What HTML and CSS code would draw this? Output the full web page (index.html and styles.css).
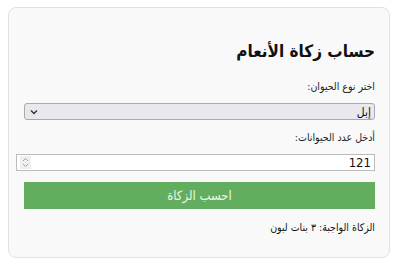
FILE: index.html
```html
<!DOCTYPE html>
<html lang="ar" dir="rtl">
<head>
<meta charset="utf-8">
<link rel="stylesheet" href="styles.css">
</head>
<body>
<div class="card">
  <h2 class="title">حساب زكاة الأنعام</h2>
  <label class="label" for="animal">اختر نوع الحيوان:</label>
  <div class="select-wrap">
    <select id="animal" class="select">
      <option>إبل</option>
    </select>
    <svg class="chev" width="8" height="6" viewBox="0 0 8 6"><path d="M1 1.5 L4 4.5 L7 1.5" fill="none" stroke="#333" stroke-width="1.4"/></svg>
  </div>
  <label class="label" for="count">أدخل عدد الحيوانات:</label>
  <div class="input-wrap">
    <input id="count" class="input" type="number" value="121">
    <span class="spin"><svg width="7" height="11" viewBox="0 0 7 11"><path d="M1 4 L3.5 1.5 L6 4 M1 7 L3.5 9.5 L6 7" fill="none" stroke="#999" stroke-width="0.9"/></svg></span>
  </div>
  <button class="btn">احسب الزكاة</button>
  <p class="result">الزكاة الواجبة: ٣ بنات لبون</p>
</div>
</body>
</html>
```
FILE: styles.css
```css
html, body {
  margin: 0;
  background: #ffffff;
}
body {
  padding: 7px 10px 0 8px;
  font-family: "DejaVu Sans Condensed", "DejaVu Sans", sans-serif;
  color: #111;
}
.card {
  width: 382px;
  box-sizing: border-box;
  background: #f9f9f9;
  border: 1px solid #e2e2e2;
  border-radius: 8px;
  padding: 14px 14px 22px 15px;
}
.title {
  font-size: 17px;
  font-weight: bold;
  margin: 14px 0 12px;
  line-height: 30px;
}
.label {
  display: block;
  font-size: 10.5px;
  line-height: 16px;
  margin: 0 0 9px;
  color: #222;
}
.select-wrap {
  position: relative;
  margin: 0 0 9px;
}
.select {
  display: block;
  width: 100%;
  height: 17px;
  font-size: 12px;
  font-family: inherit;
  appearance: none;
  -webkit-appearance: none;
  background: #e9e9ed;
  border: 1px solid #a9a9b0;
  border-radius: 3px;
  padding: 0 3px;
  color: #111;
}
.chev {
  position: absolute;
  left: 6px;
  top: 6px;
}
.input-wrap {
  position: relative;
  margin: 0 0 11px;
}
.input {
  display: block;
  width: 100%;
  padding: 1px 3px;
  height: 13px;
  font-size: 13px;
  font-family: inherit;
  border: 1px solid #bbb;
  background: #fff;
  color: #111;
}
.spin {
  position: absolute;
  left: -4px;
  top: 2px;
  width: 11px;
  height: 13px;
  background: #efefef;
  display: flex;
  align-items: center;
  justify-content: center;
}
.btn {
  display: block;
  width: 100%;
  height: 27px;
  background: #62ae5e;
  color: #eaf5e8;
  border: none;
  font-size: 13px;
  font-family: inherit;
  margin: 0 0 10px;
}
.result {
  font-size: 10.5px;
  margin: 0;
  line-height: 16px;
}
```
